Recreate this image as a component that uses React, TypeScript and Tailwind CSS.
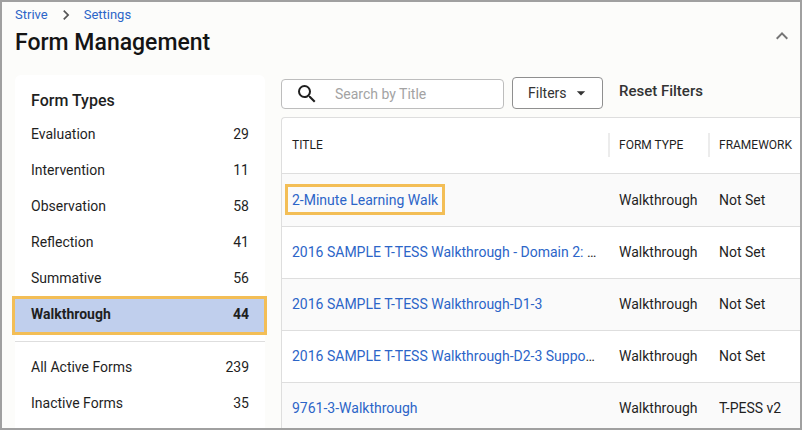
import React, { useState } from 'react';
import { MdArrowDropDown, MdChevronRight, MdExpandLess, MdSearch } from 'react-icons/md';
import clsx from 'clsx';

interface FormTypeCount {
  label: string;
  count: number;
}

interface FormRow {
  title: string;
  type: string;
  framework: string;
  shortened?: boolean;
  highlighted?: boolean;
}

const formTypes: FormTypeCount[] = [
  { label: 'Evaluation', count: 29 },
  { label: 'Intervention', count: 11 },
  { label: 'Observation', count: 58 },
  { label: 'Reflection', count: 41 },
  { label: 'Summative', count: 56 },
  { label: 'Walkthrough', count: 44 },
];

const formStates: FormTypeCount[] = [
  { label: 'All Active Forms', count: 239 },
  { label: 'Inactive Forms', count: 35 },
];

const forms: FormRow[] = [
  { title: '2-Minute Learning Walk', type: 'Walkthrough', framework: 'Not Set', highlighted: true },
  { title: '2016 SAMPLE T-TESS Walkthrough - Domain 2: ', type: 'Walkthrough', framework: 'Not Set', shortened: true },
  { title: '2016 SAMPLE T-TESS Walkthrough-D1-3', type: 'Walkthrough', framework: 'Not Set' },
  { title: '2016 SAMPLE T-TESS Walkthrough-D2-3 Suppo', type: 'Walkthrough', framework: 'Not Set', shortened: true },
  { title: '9761-3-Walkthrough', type: 'Walkthrough', framework: 'T-PESS v2' },
];

interface TypeButtonProps {
  item: FormTypeCount;
  selected: boolean;
  onSelect: (label: string) => void;
}

const TypeButton: React.FC<TypeButtonProps> = ({ item, selected, onSelect }) => (
  <button
    type="button"
    aria-pressed={selected}
    onClick={() => onSelect(item.label)}
    className={clsx(
      'relative isolate flex h-9 w-full items-center justify-between px-4 text-left',
      selected && 'font-bold'
    )}
  >
    <span>{item.label}</span>
    <span>{item.count}</span>
    {selected && (
      <span
        className="absolute top-0 -right-0.5 -bottom-[3px] -left-[3px] -z-10 border-3 border-[#f3be56] bg-[#c0cfed]"
        aria-hidden="true"
      />
    )}
  </button>
);

const Sidebar: React.FC = () => {
  const [selected, setSelected] = useState('Walkthrough');

  return (
    <aside className="w-[250px] shrink-0 rounded-t-md bg-white pt-3">
      <h2 className="px-4 pb-px text-base leading-7 font-medium">Form Types</h2>
      {formTypes.map((item) => (
        <TypeButton key={item.label} item={item} selected={selected === item.label} onSelect={setSelected} />
      ))}
      <hr className="mt-[9px] mb-[7px] border-[#dedede]" />
      {formStates.map((item) => (
        <TypeButton key={item.label} item={item} selected={selected === item.label} onSelect={setSelected} />
      ))}
    </aside>
  );
};

const Toolbar: React.FC = () => (
  <div className="flex items-end gap-2 pt-0.5">
    <label className="flex h-[30px] w-[223px] items-center rounded border border-[#bdbdbd] bg-white pl-[13px]">
      <MdSearch size={24} aria-hidden="true" className="shrink-0" />
      <input
        type="text"
        aria-label="Search by Title"
        placeholder="Search by Title"
        className="ml-4 w-full min-w-0 bg-transparent outline-none placeholder:text-[#a3a3a3]"
      />
    </label>
    <button
      type="button"
      className="flex h-8 w-[91px] items-center rounded border border-[#8f8f8f] bg-white pl-[15px] text-[#333]"
    >
      Filters
      <MdArrowDropDown size={20} className="ml-1" aria-hidden="true" />
    </button>
    <button type="button" className="mb-[3px] ml-2 h-7 text-[15px] font-medium text-[#333]">
      Reset Filters
    </button>
  </div>
);

const FormsTable: React.FC = () => (
  <div className="mt-2 flex-1 rounded-tl border-t border-l border-[#dedede] bg-white">
    <table className="w-full table-fixed text-left">
      <thead>
        <tr className="h-[55px] border-b border-[#dedede] text-xs">
          <th className="px-[10px] font-normal">TITLE</th>
          <th className="w-[100px] font-normal">
            <div className="flex h-6 items-center border-l-2 border-[#ececec] pl-[9px]">FORM TYPE</div>
          </th>
          <th className="w-[92px] font-normal">
            <div className="flex h-6 items-center border-l-2 border-[#ececec] pl-[9px]">FRAMEWORK</div>
          </th>
        </tr>
      </thead>
      <tbody>
        {forms.map((form) => (
          <tr key={form.title} className="h-[52px] border-b border-[#dedede] odd:bg-[#fafafa] first:h-[53px]">
            <td className="truncate px-[10px]">
              <a
                href="#"
                className={clsx(
                  'text-[#2c65c8]',
                  form.highlighted && '-ml-1 inline-block px-1 pt-px leading-6 outline-3 outline-[#f3be56]'
                )}
              >
                {form.title}
              </a>
              {form.shortened && '…'}
            </td>
            <td className="pl-[11px]">{form.type}</td>
            <td className="pl-[11px]">{form.framework}</td>
          </tr>
        ))}
      </tbody>
    </table>
  </div>
);

export default function App() {
  return (
    <div className="flex h-screen flex-col overflow-hidden border-2 border-[#a0a0a0] bg-[#fcfcfa] font-[Roboto,sans-serif] text-sm text-[#1f1f1f]">
      <header className="flex items-end justify-between pr-1.5 pl-[13px]">
        <div>
          <nav aria-label="Breadcrumb" className="flex h-[26px] items-center text-[13px] text-[#2c65c8]">
            <a href="#">Strive</a>
            <MdChevronRight size={20} className="mx-2 text-[#555]" aria-hidden="true" />
            <a href="#">Settings</a>
          </nav>
          <h1 className="text-[23px] leading-[30px] font-medium text-[#141414]">Form Management</h1>
        </div>
        <button type="button" aria-label="Collapse header" className="mb-2.5 text-[#757575]">
          <MdExpandLess size={24} />
        </button>
      </header>
      <main className="flex min-h-0 flex-1 gap-4 pt-[17px] pl-[13px]">
        <Sidebar />
        <section className="flex min-w-0 flex-1 flex-col">
          <Toolbar />
          <FormsTable />
        </section>
      </main>
    </div>
  );
}
